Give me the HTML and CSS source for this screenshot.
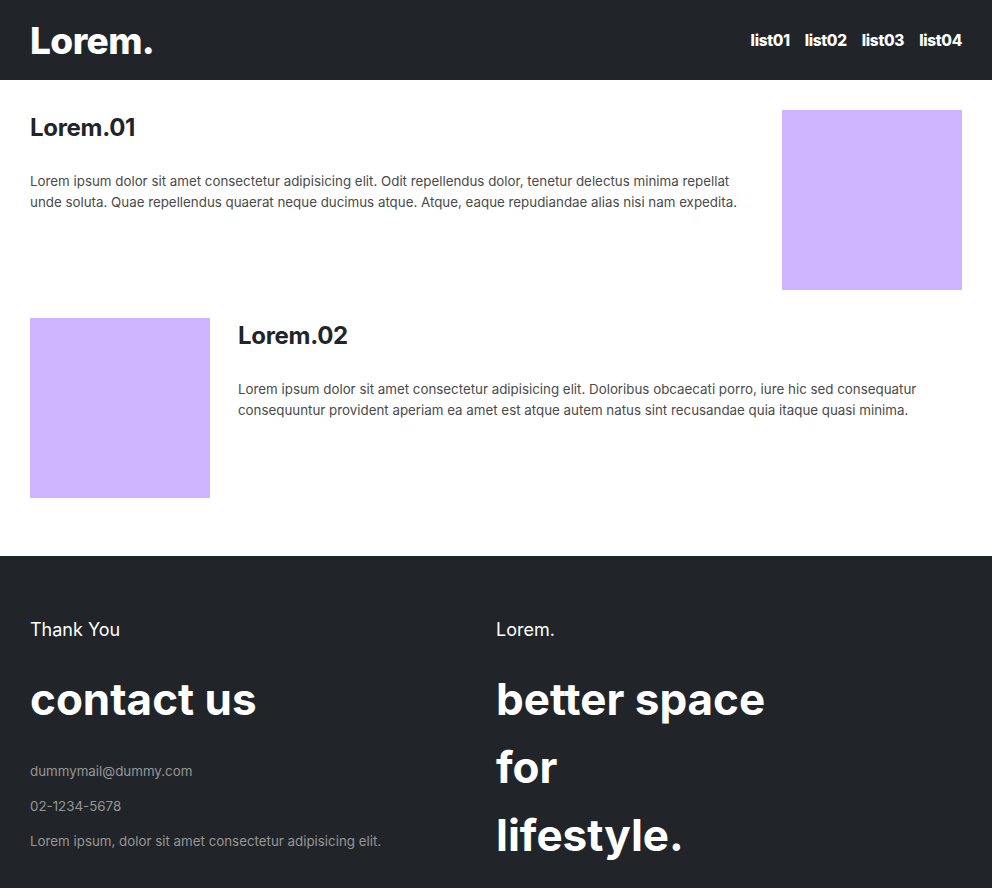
FILE: index.html
```html
<!DOCTYPE html>
<html lang="en">
<head>
<meta charset="utf-8">
<title>Lorem.</title>
<link rel="stylesheet" href="styles.css">
</head>
<body>
<header class="site-header">
  <h1 class="logo">Lorem.</h1>
  <nav class="nav">
    <a href="#">list01</a>
    <a href="#">list02</a>
    <a href="#">list03</a>
    <a href="#">list04</a>
  </nav>
</header>
<main class="main">
  <section class="row">
    <div class="text">
      <h2 class="title">Lorem.01</h2>
      <p class="desc">Lorem ipsum dolor sit amet consectetur adipisicing elit. Odit repellendus dolor, tenetur delectus minima repellat unde soluta. Quae repellendus quaerat neque ducimus atque. Atque, eaque repudiandae alias nisi nam expedita.</p>
    </div>
    <div class="pic"></div>
  </section>
  <section class="row">
    <div class="pic"></div>
    <div class="text">
      <h2 class="title">Lorem.02</h2>
      <p class="desc">Lorem ipsum dolor sit amet consectetur adipisicing elit. Doloribus obcaecati porro, iure hic sed consequatur consequuntur provident aperiam ea amet est atque autem natus sint recusandae quia itaque quasi minima.</p>
    </div>
  </section>
</main>
<footer class="footer">
  <div class="col">
    <p class="kicker">Thank You</p>
    <h2 class="big">contact us</h2>
    <p class="info">dummymail@dummy.com</p>
    <p class="info">02-1234-5678</p>
    <p class="info">Lorem ipsum, dolor sit amet consectetur adipisicing elit.</p>
  </div>
  <div class="col">
    <p class="kicker">Lorem.</p>
    <h2 class="big">better space<br>for<br>lifestyle.</h2>
  </div>
</footer>
</body>
</html>
```
FILE: styles.css
```css
* { box-sizing: border-box; }
body {
  margin: 0;
  font-family: Inter, "Noto Sans", sans-serif;
  color: #212529;
  background: #fff;
}
.site-header {
  height: 80px;
  background: #212529;
  padding: 0 30px;
  display: flex;
  align-items: center;
  justify-content: space-between;
}
.logo {
  margin: 0;
  color: #fff;
  font-size: 37px;
  font-weight: 800;
  letter-spacing: -0.6px;
}
.nav {
  display: flex;
  gap: 15px;
}
.nav a {
  color: #fff;
  text-decoration: none;
  font-weight: 800;
  font-size: 15.4px;
  letter-spacing: -0.3px;
}
.main {
  padding: 30px 30px 58px;
  display: flex;
  flex-direction: column;
  gap: 28px;
}
.row {
  display: flex;
  gap: 28px;
  align-items: flex-start;
}
.text { flex: 1; }
.pic {
  width: 180px;
  height: 180px;
  flex: none;
  background: #cfb4ff;
}
.title {
  margin: 3px 0 0;
  font-size: 24px;
  font-weight: 700;
  line-height: 29px;
  letter-spacing: -0.3px;
}
.desc {
  margin: 29px 0 0;
  font-size: 13.33px;
  line-height: 21px;
  color: #4a4a4a;
}
.footer {
  background: #212529;
  color: #fff;
  padding: 60px 30px 30px;
  display: flex;
}
.col { flex: 1; }
.kicker {
  margin: 0;
  font-size: 18px;
  line-height: 27px;
}
.big {
  margin: 22px 0 0;
  font-size: 44px;
  font-weight: 700;
  line-height: 68px;
}
.info {
  margin: 0;
  font-size: 13.33px;
  line-height: 35px;
  color: #969696;
}
.big + .info { margin-top: 21px; }
```
